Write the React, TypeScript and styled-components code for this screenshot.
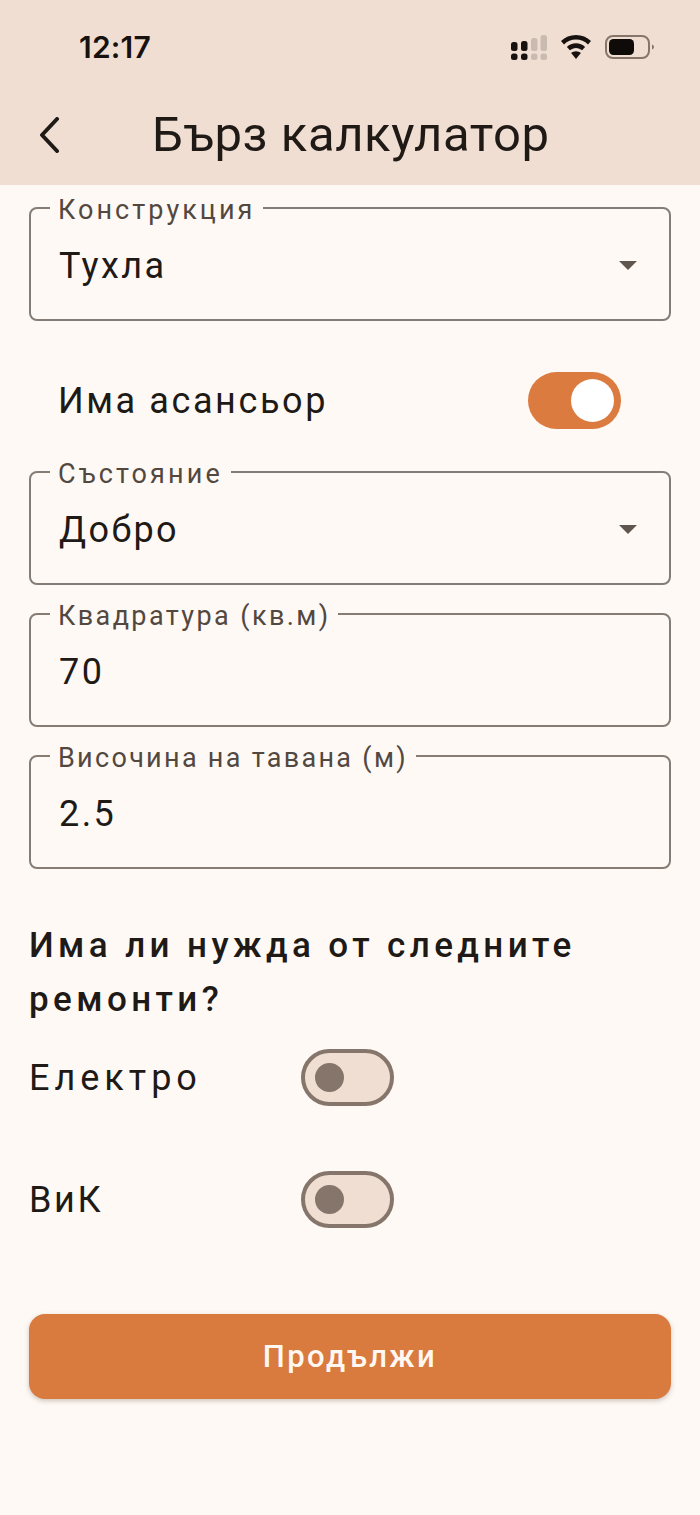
import styled, { createGlobalStyle } from "styled-components"

const GlobalStyle = createGlobalStyle`
  html, body {
    margin: 0;
    padding: 0;
    background: #fef9f5;
  }
  body {
    font-family: Roboto, "Noto Sans", sans-serif;
    color: #201a17;
  }
`

const Screen = styled.div`
  width: 700px;
  height: 1515px;
  display: flex;
  flex-direction: column;
  background: #fef9f5;
  overflow: hidden;
`

const Header = styled.header`
  height: 185px;
  background: #f0ded2;
  display: flex;
  flex-direction: column;
  flex-shrink: 0;
`

const StatusBar = styled.div`
  height: 94px;
  padding: 0 46px 0 79px;
  box-sizing: border-box;
  display: flex;
  align-items: center;
  justify-content: space-between;
`

const Clock = styled.span`
  font-family: Inter, Roboto, sans-serif;
  font-size: 30px;
  font-weight: 600;
  letter-spacing: 0.2px;
  color: #17120f;
`

const StatusIcons = styled.div`
  display: flex;
  align-items: center;
  gap: 14px;
`

const AppBar = styled.div`
  display: flex;
  align-items: center;
  height: 82px;
  padding-left: 38px;
  gap: 89px;
`

const BackButton = styled.button`
  border: 0;
  padding: 0;
  background: none;
  display: flex;
  width: 25px;
`

const Title = styled.h1`
  margin: 0;
  font-size: 49px;
  font-weight: 400;
  line-height: 82px;
  letter-spacing: 0.6px;
`

const Body = styled.main`
  flex: 1;
  padding: 8px 29px 0;
  display: flex;
  flex-direction: column;
`

const Field = styled.fieldset<{ $gap?: number }>`
  margin: 0 0 ${(p) => p.$gap ?? 14}px;
  padding: 0 27px;
  height: 128px;
  box-sizing: border-box;
  border: 2px solid #857c76;
  border-radius: 8px;
  display: flex;
  align-items: flex-start;
  justify-content: space-between;
  min-width: 0;
`

const FieldLabel = styled.legend<{ $spacing: number }>`
  padding: 0 8px;
  margin-left: -8px;
  font-size: 27px;
  line-height: 30px;
  letter-spacing: ${(p) => p.$spacing}px;
  color: #52483f;
  transform: translateY(2px);
`

const FieldValue = styled.span`
  font-size: 36px;
  line-height: 44px;
  letter-spacing: 2.4px;
  margin: 21px 0 0 1px;
`

const Caret = styled.span`
  width: 0;
  height: 0;
  margin-top: 38px;
  margin-right: 5px;
  border-left: 9px solid transparent;
  border-right: 9px solid transparent;
  border-top: 9px solid #5f5650;
`

const LiftRow = styled.div`
  display: flex;
  align-items: center;
  justify-content: space-between;
  height: 57px;
  margin: 51px 50px 28px 29px;
`

const RowLabel = styled.span<{ $spacing?: number }>`
  font-size: 36px;
  line-height: 44px;
  letter-spacing: ${(p) => p.$spacing ?? 2.6}px;
`

const Toggle = styled.span<{ $on?: boolean }>`
  width: 93px;
  height: 57px;
  box-sizing: border-box;
  border-radius: 29px;
  display: flex;
  align-items: center;
  flex-shrink: 0;
  background: ${(p) => (p.$on ? "#dc7b3f" : "#f0ded2")};
  border: ${(p) => (p.$on ? "0" : "4px solid #85756b")};
  padding: ${(p) => (p.$on ? "0 7px" : "0 10px")};
  justify-content: ${(p) => (p.$on ? "flex-end" : "flex-start")};
`

const Knob = styled.span<{ $on?: boolean }>`
  border-radius: 50%;
  width: ${(p) => (p.$on ? 43 : 29)}px;
  height: ${(p) => (p.$on ? 43 : 29)}px;
  background: ${(p) => (p.$on ? "#fff" : "#85756b")};
`

const Heading = styled.h2`
  margin: 50px 0 0;
  font-size: 35px;
  font-weight: 500;
  line-height: 54px;
  letter-spacing: 4.4px;
`

const RepairList = styled.div`
  display: flex;
  flex-direction: column;
  gap: 65px;
  margin-top: 22px;
`

const RepairRow = styled.div`
  display: flex;
  align-items: center;
  height: 57px;
`

const RepairLabel = styled(RowLabel)`
  width: 272px;
  flex-shrink: 0;
`

const SubmitButton = styled.button`
  margin-top: 86px;
  height: 85px;
  border: 0;
  border-radius: 16px;
  background: #d97a3f;
  color: #fff8f2;
  font-family: inherit;
  font-size: 31px;
  font-weight: 500;
  letter-spacing: 2.4px;
  box-shadow: 0 2px 5px rgba(90, 60, 40, 0.28);
`

function CellIcon() {
  return (
    <svg width="36" height="25" viewBox="0 0 36 25" fill="#17120f">
      <rect x="0" y="7" width="6.500" height="9" rx="2.500" />
      <rect x="10" y="6" width="6.500" height="10" rx="2.500" />
      <rect x="0" y="18.500" width="6.500" height="6.500" rx="2.500" />
      <rect x="10" y="18.500" width="6.500" height="6.500" rx="2.500" />
      <g fill="#c9bbb1">
        <rect x="20" y="3" width="6.500" height="13" rx="2.500" />
        <rect x="29.500" y="0" width="6.500" height="16" rx="2.500" />
        <rect x="20" y="18.500" width="6.500" height="6.500" rx="2.500" />
        <rect x="29.500" y="18.500" width="6.500" height="6.500" rx="2.500" />
      </g>
    </svg>
  )
}

function WifiIcon() {
  return (
    <svg width="30" height="24" viewBox="0 0 30 24" fill="#17120f">
      <path d="M15 0C9.2 0 4 2.3 0 6l3 3.4C6.200 6.400 10.400 4.600 15 4.600s8.800 1.800 12 4.800L30 6C26 2.300 20.800 0 15 0z" />
      <path d="M15 8.300c-3.500 0-6.700 1.400-9.100 3.600l3 3.400c1.600-1.500 3.800-2.400 6.100-2.400s4.500.9 6.100 2.400l3-3.400C21.700 9.700 18.500 8.300 15 8.300z" />
      <path d="M15 16.200c-1.900 0-3.600.7-4.900 1.900L15 24l4.900-5.900c-1.300-1.200-3-1.900-4.900-1.900z" />
    </svg>
  )
}

function BatteryIcon() {
  return (
    <svg width="49" height="24" viewBox="0 0 49 24">
      <rect x="1" y="1" width="43" height="22" rx="7" fill="none" stroke="#85756b" strokeWidth="2" />
      <rect x="4" y="4" width="25" height="16" rx="4.500" fill="#0e0b09" />
      <path d="M47 9.500c1.200.5 2 1.500 2 2.500s-.8 2-2 2.500z" fill="#85756b" />
    </svg>
  )
}

function BackIcon() {
  return (
    <svg width="25" height="36" viewBox="0 0 25 36" fill="none">
      <path d="M19 2 4 18l15 16" stroke="#201a17" strokeWidth="4" strokeLinecap="round" strokeLinejoin="round" />
    </svg>
  )
}

export default function App() {
  return (
    <Screen lang="bg">
      <GlobalStyle />
      <Header>
        <StatusBar>
          <Clock>12:17</Clock>
          <StatusIcons>
            <CellIcon />
            <WifiIcon />
            <BatteryIcon />
          </StatusIcons>
        </StatusBar>
        <AppBar>
          <BackButton aria-label="Назад">
            <BackIcon />
          </BackButton>
          <Title>Бърз калкулатор</Title>
        </AppBar>
      </Header>
      <Body>
        <Field $gap={0}>
          <FieldLabel $spacing={3.05}>Конструкция</FieldLabel>
          <FieldValue>Тухла</FieldValue>
          <Caret />
        </Field>
        <LiftRow>
          <RowLabel>Има асансьор</RowLabel>
          <Toggle $on>
            <Knob $on />
          </Toggle>
        </LiftRow>
        <Field>
          <FieldLabel $spacing={3.15}>Състояние</FieldLabel>
          <FieldValue>Добро</FieldValue>
          <Caret />
        </Field>
        <Field>
          <FieldLabel $spacing={2.4}>Квадратура (кв.м)</FieldLabel>
          <FieldValue>70</FieldValue>
        </Field>
        <Field $gap={0}>
          <FieldLabel $spacing={2.3}>Височина на тавана (м)</FieldLabel>
          <FieldValue>2.5</FieldValue>
        </Field>
        <Heading>Има ли нужда от следните ремонти?</Heading>
        <RepairList>
          <RepairRow>
            <RepairLabel $spacing={5}>Електро</RepairLabel>
            <Toggle>
              <Knob />
            </Toggle>
          </RepairRow>
          <RepairRow>
            <RepairLabel>ВиК</RepairLabel>
            <Toggle>
              <Knob />
            </Toggle>
          </RepairRow>
        </RepairList>
        <SubmitButton>Продължи</SubmitButton>
      </Body>
    </Screen>
  )
}
